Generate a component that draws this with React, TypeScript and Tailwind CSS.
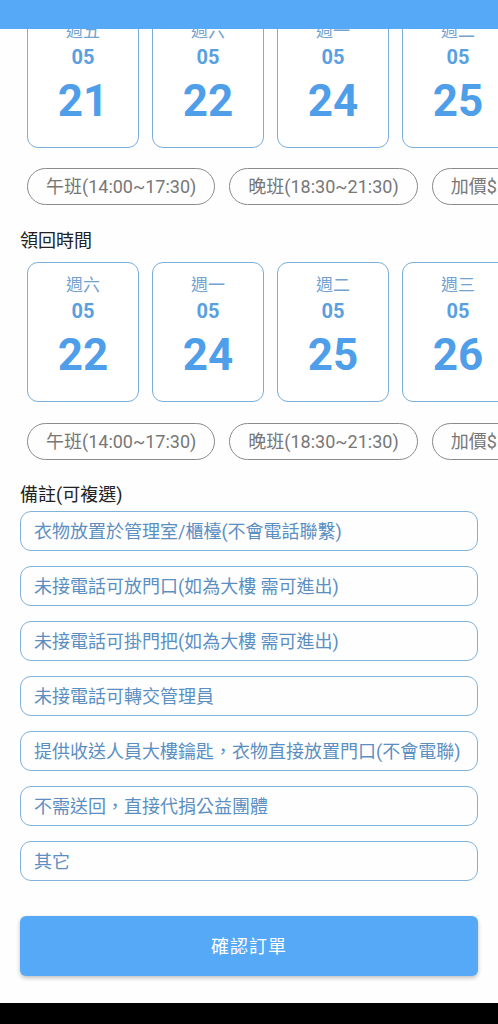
import React from "react";

type Day = { week: string; month: string; day: string };

const pickupDays: Day[] = [
  { week: "週五", month: "05", day: "21" },
  { week: "週六", month: "05", day: "22" },
  { week: "週一", month: "05", day: "24" },
  { week: "週二", month: "05", day: "25" },
  { week: "週三", month: "05", day: "26" },
];

const returnDays: Day[] = [
  { week: "週六", month: "05", day: "22" },
  { week: "週一", month: "05", day: "24" },
  { week: "週二", month: "05", day: "25" },
  { week: "週三", month: "05", day: "26" },
  { week: "週四", month: "05", day: "27" },
];

const shifts = ["午班(14:00~17:30)", "晚班(18:30~21:30)", "加價$100 急件"];

const notes = [
  "衣物放置於管理室/櫃檯(不會電話聯繫)",
  "未接電話可放門口(如為大樓 需可進出)",
  "未接電話可掛門把(如為大樓 需可進出)",
  "未接電話可轉交管理員",
  "提供收送人員大樓鑰匙，衣物直接放置門口(不會電聯)",
  "不需送回，直接代捐公益團體",
  "其它",
];

const font = { fontFamily: "Roboto, 'Noto Sans CJK TC', sans-serif" };

const DateRow = ({ days }: { days: Day[] }) => (
  <div className="flex gap-[13px] overflow-hidden pl-[27px]">
    {days.map((d, i) => (
      <div
        key={i}
        className="flex h-[140px] w-[112px] shrink-0 flex-col items-center rounded-[11px] border border-[#7aaedc] bg-white"
      >
        <span className="mt-[10px] text-[17px] leading-[24px] text-[#73a3d0]">{d.week}</span>
        <span className="mt-[2px] text-[20px] font-bold leading-[24px] text-[#5a9fe0]">{d.month}</span>
        <span className="mt-[8px] text-[44px] font-bold leading-[48px] text-[#4f9ee9]">{d.day}</span>
      </div>
    ))}
  </div>
);

const ShiftRow = () => (
  <div className="flex gap-[14px] overflow-hidden pl-[27px]">
    {shifts.map((s, i) => (
      <div
        key={i}
        className="flex h-[37px] shrink-0 items-center whitespace-nowrap rounded-full border border-[#8a8a8a] px-[18px] text-[18px] text-[#777777]"
      >
        {s}
      </div>
    ))}
  </div>
);

export default function App() {
  return (
    <div className="relative h-[1024px] w-[498px] overflow-hidden bg-[#fefefe]" style={font}>
      <div className="absolute left-0 right-0 top-0 z-10 h-[29px] bg-[#56a9f7]" />

      <div className="flex flex-col pt-[8px]">
        <DateRow days={pickupDays} />
        <div className="mt-[20px]">
          <ShiftRow />
        </div>

        <div className="mt-[23px] pl-[20px] text-[18px] leading-[26px] text-[#222]">領回時間</div>
        <div className="mt-[8px]">
          <DateRow days={returnDays} />
        </div>
        <div className="mt-[21px]">
          <ShiftRow />
        </div>

        <div className="mt-[22px] pl-[20px] text-[18px] leading-[26px] text-[#222]">備註(可複選)</div>
        <div className="mt-[3px] flex flex-col gap-[15px] px-[20px]">
          {notes.map((n, i) => (
            <div
              key={i}
              className="flex h-[40px] items-center rounded-[11px] border border-[#82b2da] px-[13px] text-[18px] text-[#5b8fc2]"
            >
              {n}
            </div>
          ))}
        </div>

        <div className="mt-[35px] px-[20px]">
          <button className="flex h-[60px] w-full items-center justify-center rounded-[6px] bg-[#56a9f7] text-[18px] tracking-[1px] text-white shadow-[0_2px_4px_rgba(0,0,0,0.25)]">
            確認訂單
          </button>
        </div>
      </div>

      <div className="absolute bottom-0 left-0 right-0 h-[21px] bg-black" />
    </div>
  );
}
